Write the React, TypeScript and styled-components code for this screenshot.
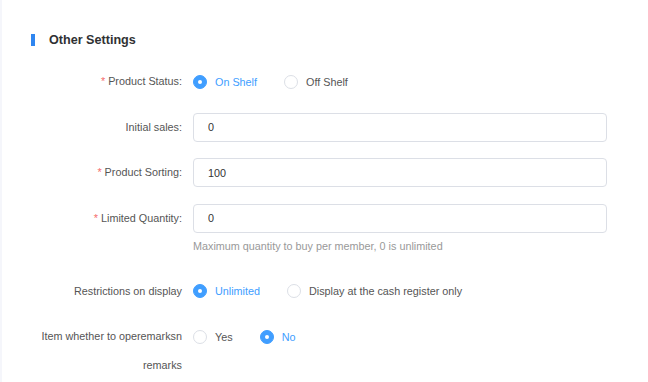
import * as React from "react";
import styled, { createGlobalStyle } from "styled-components";

const GlobalStyle = createGlobalStyle`
  html, body {
    margin: 0;
    padding: 0;
    background: #f5f6fb;
    font-family: "Liberation Sans", Arial, sans-serif;
  }
`;

interface Option {
  label: string;
  value: string;
}

interface RadioGroupProps {
  options: Option[];
  value: string;
}

const RadioGroup: React.FC<RadioGroupProps> = ({ options, value }) => (
  <Radios>
    {options.map((o) => (
      <RadioItem key={o.value}>
        <RadioCircle checked={o.value === value} />
        <RadioText checked={o.value === value}>{o.label}</RadioText>
      </RadioItem>
    ))}
  </Radios>
);

interface FieldProps {
  label: string;
  required?: boolean;
  hint?: string;
  children: React.ReactNode;
}

const Field: React.FC<FieldProps> = ({ label, required, hint, children }) => (
  <Row $hasHint={!!hint}>
    <Label>
      {required && <Star>*</Star>}
      {label}
    </Label>
    <Control>
      {children}
      {hint && <Hint>{hint}</Hint>}
    </Control>
  </Row>
);

export default function App() {
  return (
    <>
      <GlobalStyle />
      <Card>
        <Title>
          <Bar />
          Other Settings
        </Title>
        <Form>
          <Field label="Product Status:" required>
            <RadioGroup
              value="on"
              options={[
                { label: "On Shelf", value: "on" },
                { label: "Off Shelf", value: "off" },
              ]}
            />
          </Field>
          <Field label="Initial sales:">
            <Input defaultValue="0" />
          </Field>
          <Field label="Product Sorting:" required>
            <Input defaultValue="100" />
          </Field>
          <Field
            label="Limited Quantity:"
            required
            hint="Maximum quantity to buy per member, 0 is unlimited"
          >
            <Input defaultValue="0" />
          </Field>
          <Field label="Restrictions on display">
            <RadioGroup
              value="unlimited"
              options={[
                { label: "Unlimited", value: "unlimited" },
                { label: "Display at the cash register only", value: "cash" },
              ]}
            />
          </Field>
          <Field label="Item whether to operemarksn remarks">
            <RadioGroup
              value="no"
              options={[
                { label: "Yes", value: "yes" },
                { label: "No", value: "no" },
              ]}
            />
          </Field>
        </Form>
      </Card>
    </>
  );
}

const Card = styled.div`
  margin-left: 2px;
  min-height: 382px;
  background: #fff;
  padding: 30px 0 0 29px;
  box-sizing: border-box;
`;

const Title = styled.div`
  display: flex;
  align-items: center;
  gap: 14px;
  height: 20px;
  font-size: 12.6px;
  font-weight: bold;
  color: #303133;
`;

const Bar = styled.span`
  display: inline-block;
  width: 4px;
  height: 12px;
  background: #2f86f0;
`;

const Form = styled.div`
  margin-top: 17px;
  margin-left: -29px;
`;

const Row = styled.div<{ $hasHint: boolean }>`
  display: flex;
  align-items: flex-start;
  margin-bottom: ${({ $hasHint }) => ($hasHint ? "23px" : "16.5px")};
`;

const Label = styled.div`
  width: 180px;
  flex-shrink: 0;
  padding-right: 11px;
  text-align: right;
  font-size: 10.8px;
  line-height: 29px;
  color: #555;
`;

const Star = styled.span`
  color: #f56c6c;
  margin-right: 3px;
`;

const Control = styled.div`
  display: flex;
  flex-direction: column;
`;

const Input = styled.input`
  width: 414px;
  height: 29px;
  box-sizing: border-box;
  border: 1px solid #dcdfe6;
  border-radius: 4px;
  padding: 0 14px;
  font-family: inherit;
  font-size: 10.8px;
  color: #333;
  outline: none;
`;

const Hint = styled.div`
  margin-top: 5px;
  font-size: 10.8px;
  line-height: 16px;
  color: #999;
`;

const Radios = styled.div`
  display: flex;
  align-items: center;
  height: 29px;
  gap: 27px;
`;

const RadioItem = styled.label`
  display: flex;
  align-items: center;
  gap: 8px;
  cursor: pointer;
`;

const RadioCircle = styled.span<{ checked: boolean }>`
  width: 14px;
  height: 14px;
  box-sizing: border-box;
  border-radius: 50%;
  border: 1px solid ${({ checked }) => (checked ? "#409eff" : "#dcdfe6")};
  background: ${({ checked }) => (checked ? "#409eff" : "#fff")};
  display: flex;
  align-items: center;
  justify-content: center;
  &::after {
    content: "";
    width: 4px;
    height: 4px;
    border-radius: 50%;
    background: #fff;
    display: ${({ checked }) => (checked ? "block" : "none")};
  }
`;

const RadioText = styled.span<{ checked: boolean }>`
  font-size: 10.8px;
  color: ${({ checked }) => (checked ? "#409eff" : "#555")};
`;
